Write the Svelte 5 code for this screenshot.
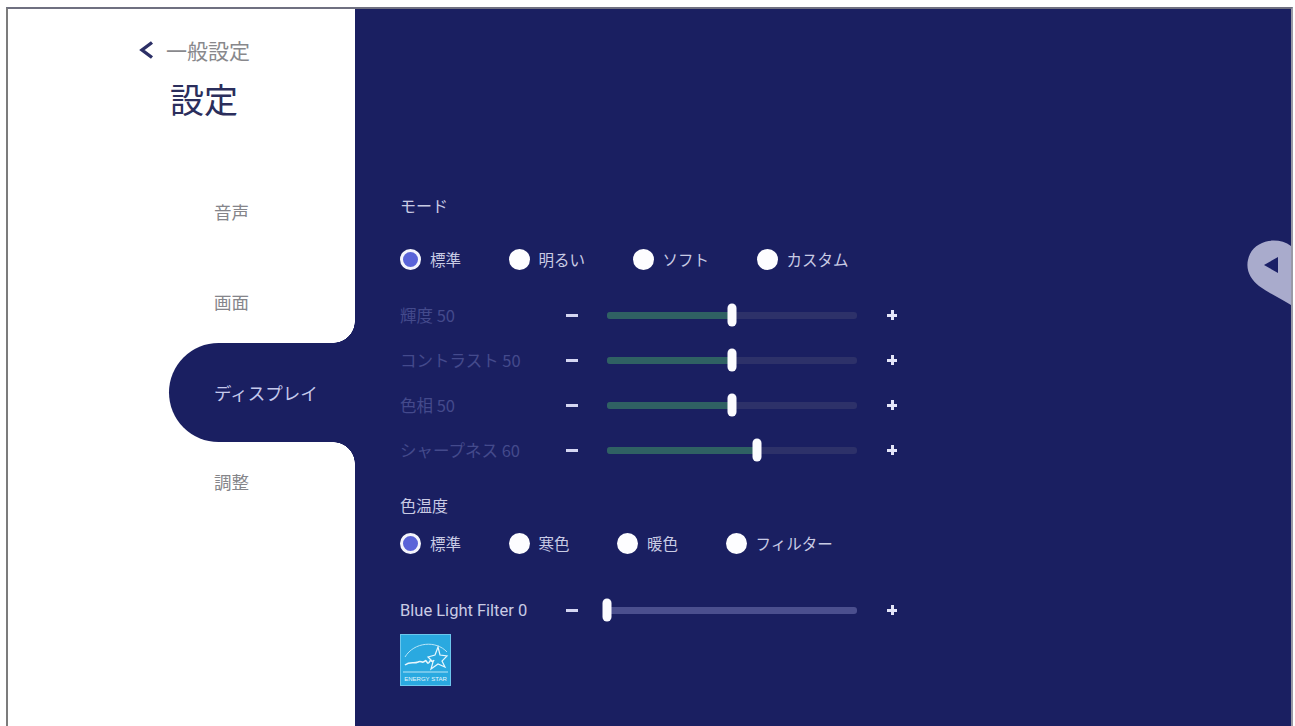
<script>
  const navItems = [
    { label: '音声' },
    { label: '画面' },
    { label: 'ディスプレイ', active: true },
    { label: '調整' }
  ];
  const modes = ['標準', '明るい', 'ソフト', 'カスタム'];
  const temps = ['標準', '寒色', '暖色', 'フィルター'];
  const sliders = [
    { label: '輝度 50', value: 50 },
    { label: 'コントラスト 50', value: 50 },
    { label: '色相 50', value: 50 },
    { label: 'シャープネス 60', value: 60 }
  ];
</script>

{#snippet radios(options)}
  <div class="radios">
    {#each options as option, i}
      <div class="radio-item">
        <span class="radio" class:checked={i === 0}></span>
        <span>{option}</span>
      </div>
    {/each}
  </div>
{/snippet}

{#snippet slider(label, value, enabled)}
  <div class="slider-row" class:enabled>
    <span class="slider-label">{label}</span>
    <span class="minus"></span>
    <div class="track">
      <div class="fill" style="width: {value}%"></div>
      <span class="thumb" style="left: {value}%"></span>
    </div>
    <span class="plus"></span>
  </div>
{/snippet}

<div class="frame">
  <aside class="sidebar">
    <div class="back">
      <svg width="18" height="22" viewBox="0 0 18 22">
        <path d="M15 3.5 L5 11 L15 18.5" fill="none" stroke="#2c2f66" stroke-width="3.4" />
      </svg>
      <span>一般設定</span>
    </div>
    <h1>設定</h1>
    <nav>
      {#each navItems as item}
        <div class="nav-item" class:active={item.active}>{item.label}</div>
      {/each}
    </nav>
  </aside>

  <main>
    <div class="heading">モード</div>
    <div class="mode-radios">{@render radios(modes)}</div>
    <div class="sliders">
      {#each sliders as s}
        {@render slider(s.label, s.value, false)}
      {/each}
    </div>
    <div class="heading temp-heading">色温度</div>
    <div class="temp-radios">{@render radios(temps)}</div>
    <div class="blf">{@render slider('Blue Light Filter 0', 0, true)}</div>
    <svg class="energy" width="51" height="52" viewBox="0 0 51 52">
      <rect width="51" height="52" fill="#2aa9e0" />
      <rect x="0.5" y="0.5" width="50" height="51" fill="none" stroke="#6cc6ec" />
      <path d="M5 23 C14 8 36 6 47 18" fill="none" stroke="#b9e6f8" stroke-width="1" />
      <path d="M5 31 C10 27 14 30 18 28 C21 26 22 30 25 27 C27 25 27 33 30 27 C31 25 32 30 34 26" fill="none" stroke="#e8f7fd" stroke-width="1.6" />
      <path d="M38 13 L40 21 L47 22 L42 27 L45 33 L38 30 L31 35 L33 28 L28 23 L35 21 Z" fill="none" stroke="#e8f7fd" stroke-width="1.2" />
      <path d="M3 38 H48" stroke="#b9e6f8" stroke-width="1" />
      <text x="25.5" y="47" text-anchor="middle">ENERGY STAR</text>
    </svg>
    <svg class="pull-tab" width="44" height="66" viewBox="0 0 44 66">
      <path d="M44 6 C32 -3 10 -1 3 14 C-3 27 2 38 12 46 C22 53 34 59 44 65 Z" fill="#a9abcc" />
      <path d="M17 25 L31 17 L31 33 Z" fill="#1a1f66" />
    </svg>
  </main>
</div>

<style>
  :global(body) {
    background: #fff;
    font-family: "Noto Sans CJK JP", "Noto Sans", sans-serif;
  }
  .frame {
    display: flex;
    box-sizing: border-box;
    width: 1287px;
    height: 719px;
    margin: 7px 0 0 6px;
    border-left: 2px solid #7c7c7c;
    border-top: 2px solid #6f7080;
    border-right: 2px solid #9a9aa6;
  }
  .sidebar {
    flex: 0 0 347px;
    box-sizing: border-box;
    padding-top: 27px;
    background: #fff;
  }
  .back {
    display: flex;
    align-items: center;
    gap: 11px;
    margin-left: 129px;
    height: 28px;
    font-size: 21px;
    line-height: 28px;
    color: #88888c;
  }
  h1 {
    margin: 12px 0 0 162px;
    font-size: 34px;
    line-height: 46px;
    font-weight: 400;
    color: #2b2e5c;
  }
  nav {
    margin-top: 45px;
    display: flex;
    flex-direction: column;
  }
  .nav-item {
    height: 90px;
    padding-left: 206px;
    font-size: 17.5px;
    line-height: 90px;
    color: #85858a;
  }
  .nav-item.active {
    position: relative;
    height: 99px;
    margin: -4.5px 0 -4.5px 161px;
    padding-left: 45px;
    line-height: 99px;
    color: #c5c9ec;
    background: #1a1f61;
    border-radius: 50px 0 0 50px;
  }
  .nav-item.active::before,
  .nav-item.active::after {
    content: "";
    position: absolute;
    right: 0;
    width: 22px;
    height: 22px;
    background: radial-gradient(circle at 0 0, #fff 21.5px, #1a1f61 22px);
  }
  .nav-item.active::before {
    top: -22px;
  }
  .nav-item.active::after {
    bottom: -22px;
    transform: scaleY(-1);
  }
  main {
    position: relative;
    flex: 1;
    box-sizing: border-box;
    padding: 184px 0 0 45px;
    background: #1a1f61;
    color: #c9cbe4;
    font-size: 16px;
  }
  .heading {
    line-height: 24px;
    height: 24px;
  }
  .mode-radios {
    margin-top: 30px;
  }
  .sliders {
    margin-top: 21.5px;
  }
  .temp-heading {
    margin-top: 20.5px;
  }
  .temp-radios {
    margin-top: 14px;
  }
  .blf {
    margin-top: 32.5px;
  }
  .radios {
    display: flex;
    gap: 47.5px;
    height: 24px;
    font-size: 15.5px;
    line-height: 24px;
  }
  .radio-item {
    display: flex;
    align-items: center;
    gap: 9px;
  }
  .radio {
    box-sizing: border-box;
    width: 21px;
    height: 21px;
    border-radius: 50%;
    background: #fdfdff;
  }
  .radio.checked {
    background: #5a63d8;
    border: 3.5px solid #f4f4fc;
  }
  .slider-row {
    display: grid;
    grid-template-columns: 137px 24px 250px 24px;
    column-gap: 23px;
    align-items: center;
    height: 45px;
  }
  .slider-label {
    font-size: 16.5px;
    white-space: nowrap;
    color: #444a8c;
  }
  .enabled .slider-label {
    font-family: Roboto, sans-serif;
    color: #c9cbe4;
  }
  .minus {
    justify-self: center;
    width: 12px;
    height: 3px;
    background: #d4d6f2;
  }
  .plus {
    justify-self: center;
    width: 10px;
    height: 10px;
    background:
      linear-gradient(#e4e5f8, #e4e5f8) center / 10px 3px no-repeat,
      linear-gradient(#e4e5f8, #e4e5f8) center / 3px 10px no-repeat;
  }
  .track {
    position: relative;
    height: 7px;
    border-radius: 3px;
    background: #2d3169;
  }
  .enabled .track {
    background: #4b4f8e;
  }
  .fill {
    height: 100%;
    border-radius: 3px 0 0 3px;
    background: #2f6163;
  }
  .thumb {
    position: absolute;
    top: 50%;
    width: 9px;
    height: 23px;
    border-radius: 5px;
    background: #fbfbff;
    transform: translate(-50%, -50%);
  }
  .energy {
    display: block;
    margin-top: 1.5px;
  }
  .energy text {
    font-family: "Liberation Sans", sans-serif;
    font-size: 6px;
    fill: #e8f7fd;
  }
  .pull-tab {
    position: absolute;
    top: 231px;
    right: 0;
  }
</style>
